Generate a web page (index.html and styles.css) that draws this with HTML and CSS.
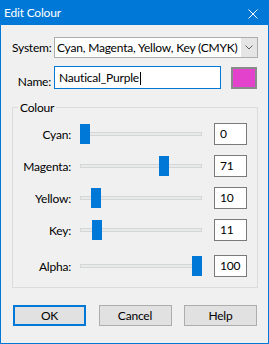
FILE: index.html
```html
<!DOCTYPE html>
<html>
<head>
<meta charset="utf-8">
<link rel="stylesheet" href="styles.css">
</head>
<body>
<div class="window">
  <div class="titlebar">
    <span class="title">Edit Colour</span>
    <svg class="close" width="10" height="10" viewBox="0 0 10 10"><path d="M0.5 0.5 L9.5 9.5 M9.5 0.5 L0.5 9.5" stroke="#fff" stroke-width="1" fill="none"/></svg>
  </div>
  <div class="content">
    <div class="field-row">
      <span class="field-label">System:</span>
      <div class="combo">
        <span class="combo-text">Cyan, Magenta, Yellow, Key (CMYK)</span>
        <span class="combo-btn"><svg width="8" height="5" viewBox="0 0 8 5"><path d="M0.5 0.5 L4 4 L7.5 0.5" stroke="#606060" stroke-width="1" fill="none"/></svg></span>
      </div>
    </div>
    <div class="field-row name-row">
      <span class="field-label">Name:</span>
      <div class="text-input">Nautical_Purple<span class="caret"></span></div>
      <div class="swatch"></div>
    </div>
    <fieldset class="group">
      <legend>Colour</legend>
      <div class="sliders">
        <div class="slider-row">
          <span class="s-label">Cyan:</span>
          <div class="track"><div class="thumb" style="left:-1px"></div></div>
          <div class="num">0</div>
        </div>
        <div class="slider-row">
          <span class="s-label">Magenta:</span>
          <div class="track"><div class="thumb" style="left:78px"></div></div>
          <div class="num">71</div>
        </div>
        <div class="slider-row">
          <span class="s-label">Yellow:</span>
          <div class="track"><div class="thumb" style="left:10px"></div></div>
          <div class="num">10</div>
        </div>
        <div class="slider-row">
          <span class="s-label">Key:</span>
          <div class="track"><div class="thumb" style="left:11px"></div></div>
          <div class="num">11</div>
        </div>
        <div class="slider-row alpha">
          <span class="s-label">Alpha:</span>
          <div class="track"><div class="thumb" style="left:111px"></div></div>
          <div class="num">100</div>
        </div>
      </div>
    </fieldset>
    <div class="buttons">
      <button class="btn default">OK</button>
      <button class="btn">Cancel</button>
      <button class="btn">Help</button>
    </div>
  </div>
</div>
</body>
</html>
```
FILE: styles.css
```css
* { box-sizing: border-box; }
html, body { margin: 0; padding: 0; }
body {
  width: 269px;
  height: 344px;
  overflow: hidden;
  background: #f0f0f0;
  font-family: Lato, "Noto Sans", sans-serif;
  font-size: 12px;
  letter-spacing: -0.2px;
  color: #000;
}
.window {
  width: 269px;
  height: 344px;
  border: 1px solid #0078d7;
  background: #f0f0f0;
  display: flex;
  flex-direction: column;
}
.titlebar {
  height: 24px;
  flex: none;
  background: #0078d7;
  color: #fff;
  display: flex;
  align-items: center;
  justify-content: space-between;
  padding: 0 10px 0 3px;
}
.title { line-height: 24px; }
.close { display: block; margin-top: 1px; }
.content {
  flex: 1;
  padding: 12px 10px 0 11px;
  display: flex;
  flex-direction: column;
}
.field-row { display: flex; align-items: center; }
.field-label {
  width: 42px;
  flex: none;
  text-align: right;
  padding-right: 3px;
}
.combo {
  width: 204px;
  height: 21px;
  border: 1px solid #adadad;
  background: #fff;
  display: flex;
}
.combo-text {
  flex: 1;
  padding-left: 2px;
  line-height: 19px;
  white-space: nowrap;
  overflow: hidden;
}
.combo-btn {
  width: 16px;
  background: #e5e5e5;
  display: flex;
  align-items: center;
  justify-content: center;
}
.combo-btn svg { display: block; }
.name-row { margin-top: 8px; align-items: flex-end; }
.text-input {
  width: 167px;
  height: 23px;
  border: 1px solid #0078d7;
  background: #fff;
  padding-left: 4px;
  line-height: 21px;
  white-space: nowrap;
}
.caret {
  display: inline-block;
  width: 1px;
  height: 13px;
  margin-left: 1px;
  background: #000;
  vertical-align: -3px;
}
.swatch {
  width: 26px;
  height: 22px;
  margin-left: 10px;
  border: 2px solid #8a8a8a;
  background: #e342cc;
}
.group {
  margin: 11px 0 0 0;
  padding: 8px 0 10px 0;
  border: 1px solid #dcdcdc;
  min-width: 0;
}
.group legend {
  margin-left: 5px;
  padding: 0 2px;
  line-height: 15px;
}
.sliders {
  display: flex;
  flex-direction: column;
  gap: 10px;
}
.slider-row {
  display: flex;
  align-items: center;
  height: 22px;
}
.slider-row.alpha { margin-top: 4px; }
.s-label {
  width: 59px;
  flex: none;
  text-align: right;
  padding-right: 1px;
}
.track {
  position: relative;
  width: 122px;
  height: 4px;
  margin-left: 8px;
  background: #e7eaea;
  border: 1px solid #d6d6d6;
}
.thumb {
  position: absolute;
  top: 50%;
  width: 10px;
  height: 20px;
  margin-top: -10px;
  background: #0078d7;
}
.num {
  width: 33px;
  height: 22px;
  margin-left: 12px;
  border: 1px solid #7a7a7a;
  background: #fff;
  padding-left: 5px;
  line-height: 20px;
}
.buttons {
  display: flex;
  justify-content: space-between;
  margin: 17px 1px 0 1px;
}
.btn {
  width: 73px;
  height: 21px;
  padding: 0;
  border: 1px solid #adadad;
  background: #e1e1e1;
  font: inherit;
  letter-spacing: inherit;
  color: #000;
  line-height: 19px;
  text-align: center;
}
.btn.default {
  border: 2px solid #0078d7;
  line-height: 17px;
}
```
